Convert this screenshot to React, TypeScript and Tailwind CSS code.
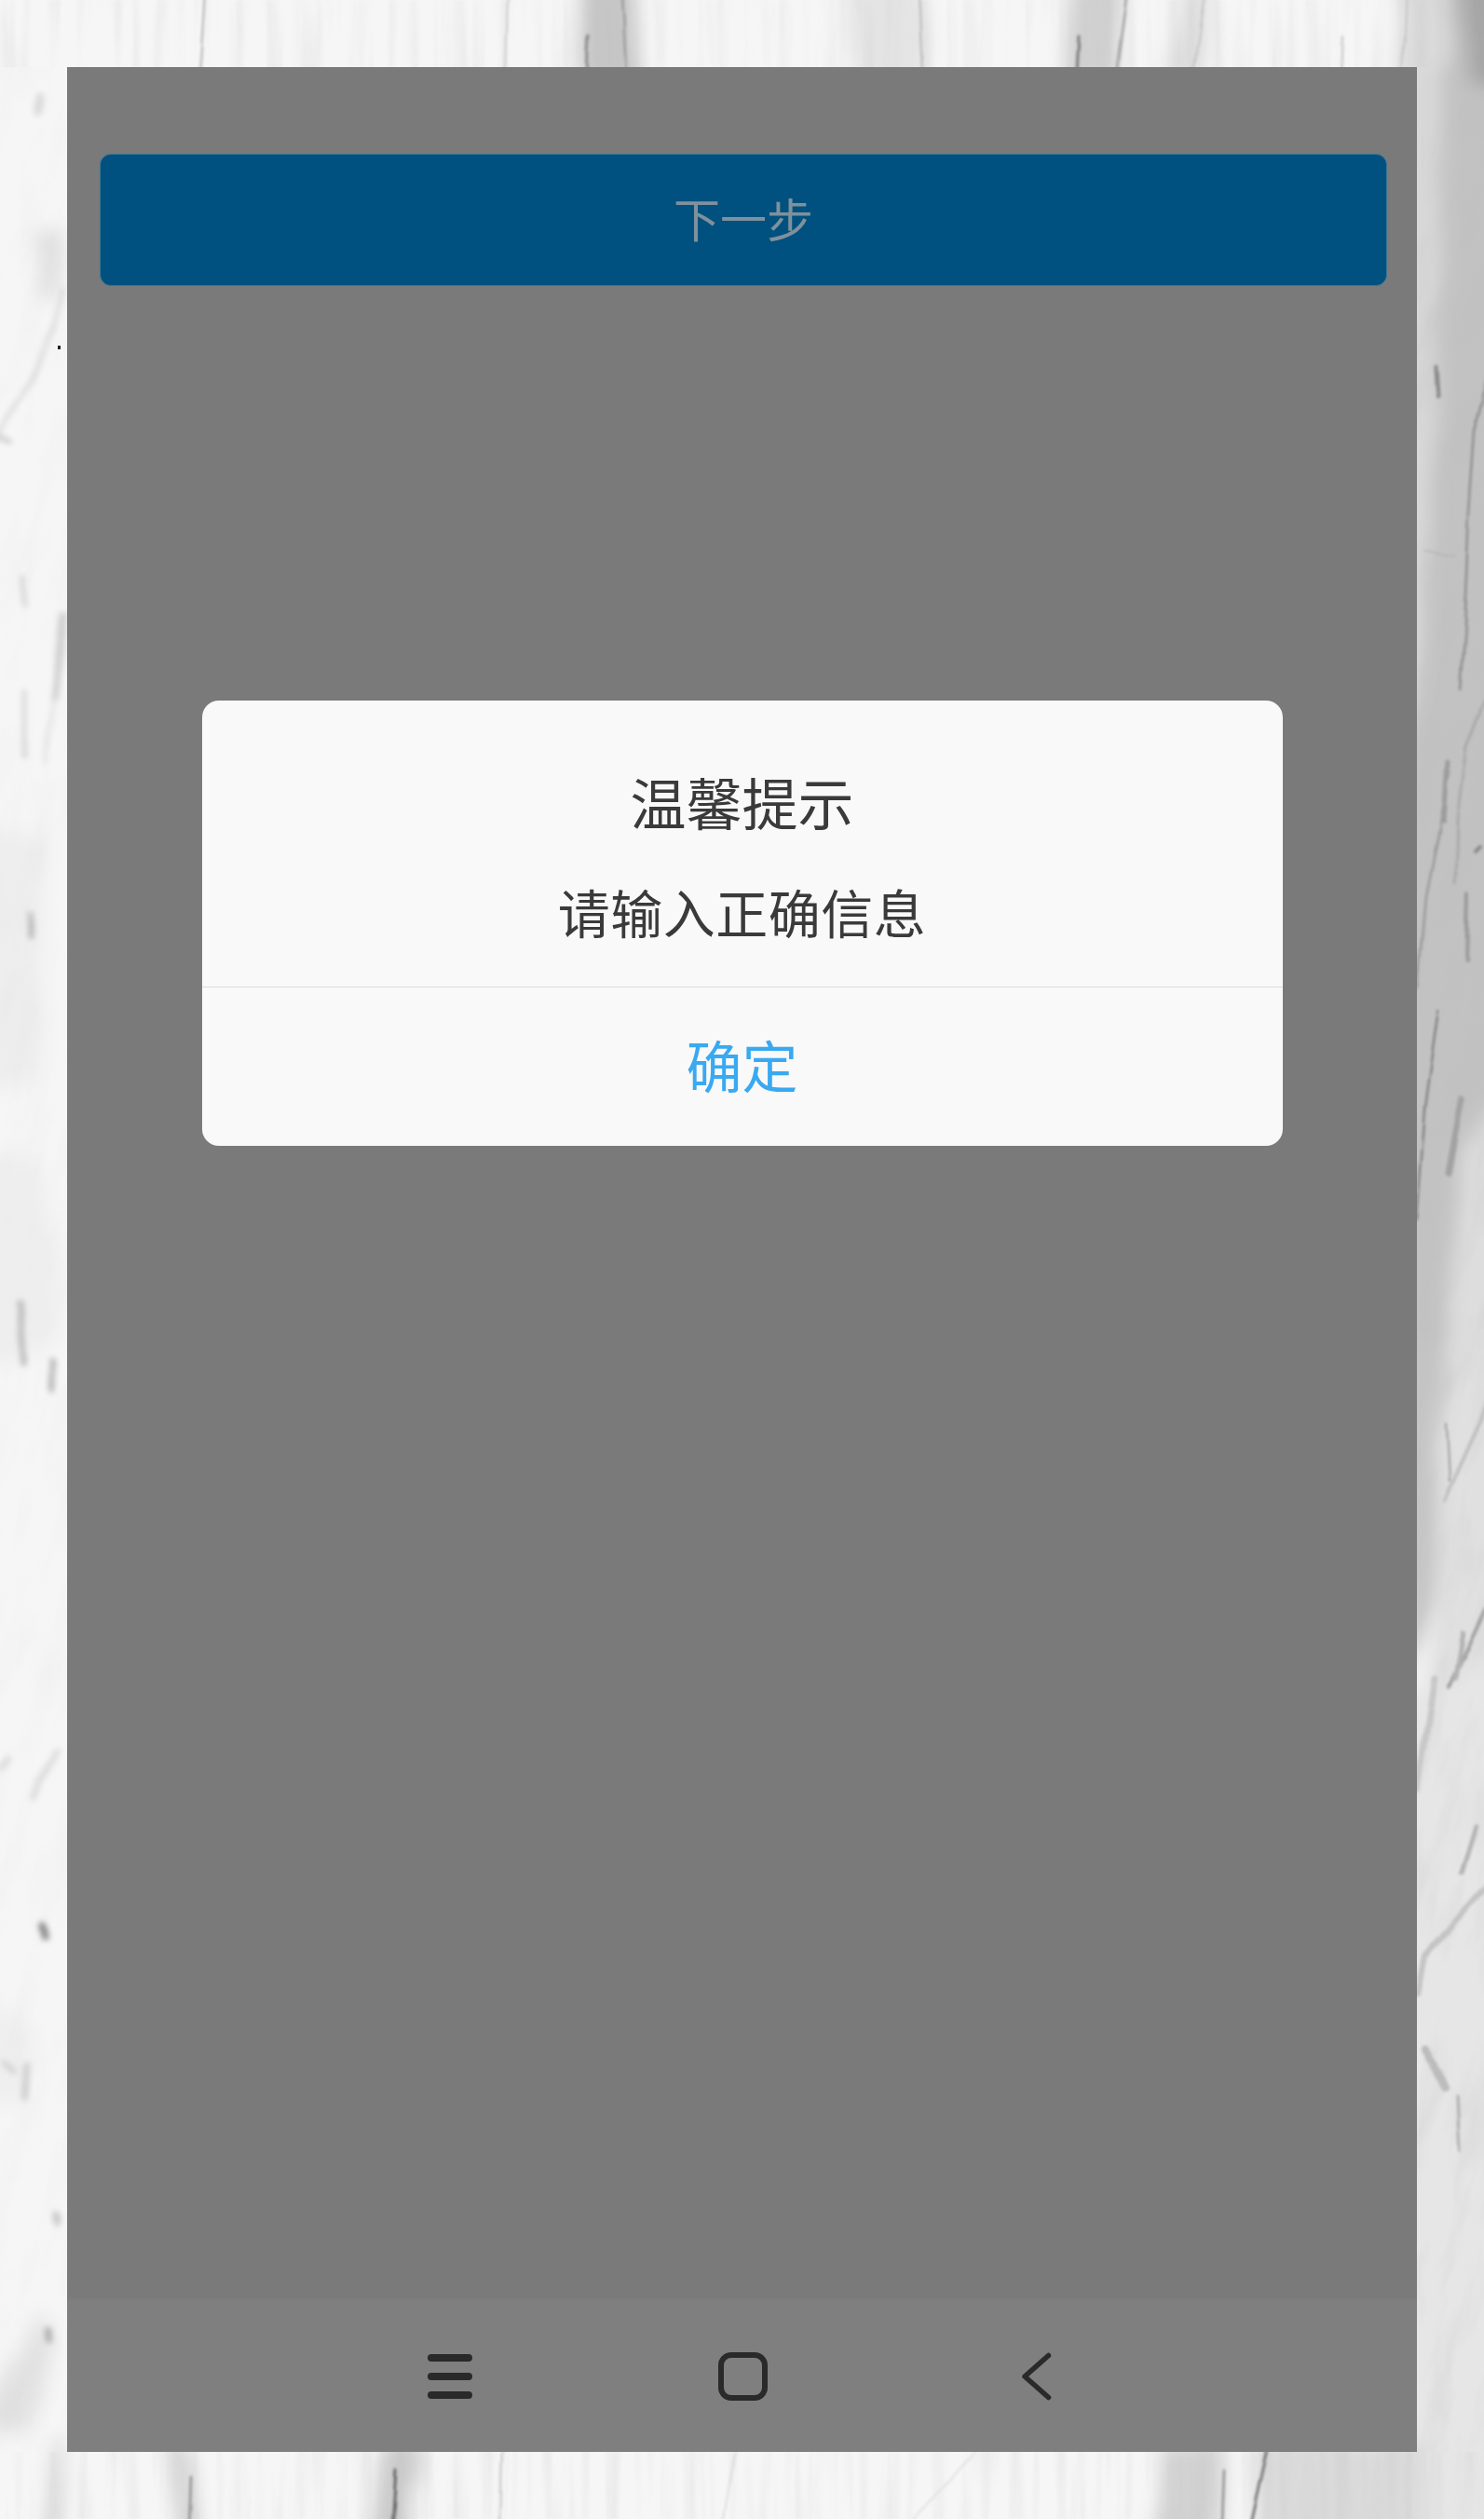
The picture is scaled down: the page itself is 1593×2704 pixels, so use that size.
import React from 'react';

// marble backdrop: soft patches, then veins on top
const patches: [string, string][] = [
  ['1500,-40 1660,-40 1660,1480 1500,1480', '#c2c2c2'],
  ['1500,72 1546,72 1540,420 1532,720 1500,800', '#d8d8d8'],
  ['1560,-40 1660,-40 1660,110 1575,90', '#a6a6a6'],
  ['1500,-40 1555,-40 1550,80 1500,80', '#dadada'],
  ['1660,1120 1660,1480 1566,1520 1556,1400 1570,1230', '#dddddd'],
  ['1500,1440 1552,1440 1550,1560 1535,1740 1500,1830', '#c4c4c4'],
  ['1552,1440 1660,1440 1660,1760 1535,1830 1545,1650', '#e0e0e0'],
  ['1500,1830 1660,1760 1660,2760 1500,2760', '#e6e6e6'],
  ['632,-40 678,-40 674,90 628,90', '#c6c6c6'],
  ['1150,-40 1210,-40 1200,90 1146,90', '#d0d0d0'],
  ['1270,-40 1300,-40 1286,90 1258,90', '#dcdcdc'],
  ['905,-40 990,-40 990,90 925,90', '#e4e4e4'],
  ['190,2620 205,2620 205,2760 188,2760', '#cfcfcf'],
  ['412,2620 450,2620 445,2760 392,2760', '#cbcbcb'],
  ['60,2620 78,2620 60,2760 42,2760', '#d8d8d8'],
  ['1248,2620 1312,2620 1308,2760 1240,2760', '#d2d2d2'],
  ['1350,2620 1530,2620 1530,2760 1340,2760', '#dadada'],
  ['-40,880 50,900 45,1160 -40,1180', '#eeeeee'],
  ['-40,1230 50,1240 60,1440 -40,1480', '#eeeeee'],
  ['36,250 58,250 56,320 40,320', '#dedede'],
  ['-40,2600 45,2480 58,2520 20,2610', '#e2e2e2'],
  ['-40,2130 40,2180 30,2270 -40,2250', '#efefef'],
];

const veins: [string, number, string][] = [
  ['M222 -10 L219 40 L216 80', 2.5, '#bcbcbc'],
  ['M546 -10 L544 80', 2, '#cacaca'],
  ['M632 38 L630 80', 3, '#8c8c8c'],
  ['M668 -10 L672 80', 3, '#a0a0a0'],
  ['M986 -10 L990 80', 2, '#b6b6b6'],
  ['M1158 38 L1156 80', 3, '#7c7c7c'],
  ['M1210 -10 L1198 80', 3, '#a8a8a8'],
  ['M1292 -10 L1280 80', 2, '#c4c4c4'],
  ['M1442 40 L1440 80', 2, '#c4c4c4'],
  ['M1510 -10 L1506 80', 2, '#c4c4c4'],
  ['M204 2660 L202 2714', 3, '#9a9a9a'],
  ['M424 2650 L420 2714', 3, '#666666'],
  ['M540 2625 L538 2714', 2, '#c2c2c2'],
  ['M1052 2625 L972 2714', 2, '#e0e0e0'],
  ['M790 2625 L775 2714', 2, '#dcdcdc'],
  ['M1314 2650 L1312 2714', 2.5, '#909090'],
  ['M1362 2625 L1352 2670 L1342 2714', 3, '#787878'],
  ['M1600 390 L1585 450 L1578 550 L1574 640 L1567 740', 2.5, '#8e8e8e'],
  ['M1555 830 L1542 900 L1530 960 L1522 1060', 2.5, '#989898'],
  ['M1553 820 L1549 880', 5, '#9c9c9c'],
  ['M1543 395 L1545 425', 5, '#8a8a8a'],
  ['M1530 592 L1562 597', 1, '#a8a8a8'],
  ['M1545 1085 L1530 1190 L1521 1310', 2, '#747474'],
  ['M1600 740 L1575 800 L1565 880 L1563 950', 3, '#a8a8a8'],
  ['M1576 960 L1574 1030', 4, '#9a9a9a'],
  ['M1570 1180 L1562 1220 L1555 1260', 7, '#a2a2a2'],
  ['M1590 910 L1585 915', 4, '#8a8a8a'],
  ['M1552 1530 L1555 1590', 2, '#9c9c9c'],
  ['M1600 1500 L1550 1610', 4, '#c0c0c0'],
  ['M1600 1715 L1565 1790 L1555 1810', 4, '#a2a2a2'],
  ['M1570 1752 L1562 1802', 5, '#b2b2b2'],
  ['M1540 1800 L1522 1920', 7, '#c8c8c8'],
  ['M1585 1960 L1570 2010', 5, '#b4b4b4'],
  ['M1600 2020 L1530 2100 L1522 2140', 6, '#c4c4c4'],
  ['M1530 2200 L1545 2230 L1550 2240', 8, '#bcbcbc'],
  ['M1565 2250 L1568 2310', 3, '#aeaeae'],
];

const faintVeins: [string, number, string][] = [
  ['M70 310 L35 410 L-5 470', 4, '#d6d6d6'],
  ['M-5 468 L12 474', 5, '#c6c6c6'],
  ['M24 620 L25 650', 4, '#cccccc'],
  ['M25 740 L25 810', 3, '#c8c8c8'],
  ['M68 660 L58 750', 8, '#d0d0d0'],
  ['M58 750 L47 820', 3, '#dcdcdc'],
  ['M33 980 L33 1005', 6, '#acacac'],
  ['M45 105 L42 120', 8, '#d8d8d8'],
  ['M22 1400 L26 1462', 7, '#b8b8b8'],
  ['M57 1460 L56 1490', 6, '#b2b2b2'],
  ['M60 1880 L35 1930', 7, '#dcdcdc'],
  ['M8 1890 L0 1900', 6, '#d8d8d8'],
  ['M45 2068 L48 2080', 7, '#808080'],
  ['M30 2220 L28 2250', 8, '#cecece'],
  ['M15 2225 L5 2215', 6, '#d4d4d4'],
  ['M60 2378 L62 2386', 8, '#c8c8c8'],
  ['M49 2500 L50 2512', 6, '#acacac'],
];

const MarbleBackdrop: React.FC = () => (
  <svg className="absolute inset-0 w-full h-full" viewBox="0 0 1593 2704" preserveAspectRatio="none">
    <defs>
      <filter id="soft" x="-10%" y="-10%" width="120%" height="120%">
        <feTurbulence type="fractalNoise" baseFrequency="0.02 0.006" numOctaves="3" seed="5" result="n" />
        <feDisplacementMap in="SourceGraphic" in2="n" scale="30" xChannelSelector="R" yChannelSelector="G" />
        <feGaussianBlur stdDeviation="10" />
      </filter>
      <filter id="fine" x="-10%" y="-10%" width="120%" height="120%">
        <feTurbulence type="fractalNoise" baseFrequency="0.025 0.015" numOctaves="2" seed="12" result="n" />
        <feDisplacementMap in="SourceGraphic" in2="n" scale="9" xChannelSelector="R" yChannelSelector="G" />
        <feGaussianBlur stdDeviation="1.6" />
      </filter>
      <filter id="faint" x="-10%" y="-10%" width="120%" height="120%">
        <feTurbulence type="fractalNoise" baseFrequency="0.025 0.015" numOctaves="2" seed="3" result="n" />
        <feDisplacementMap in="SourceGraphic" in2="n" scale="10" xChannelSelector="R" yChannelSelector="G" />
        <feGaussianBlur stdDeviation="3" />
      </filter>
      <filter id="streaks" x="0" y="0" width="100%" height="100%">
        <feTurbulence type="fractalNoise" baseFrequency="0.06 0.003" numOctaves="4" seed="8" />
        <feColorMatrix values="0 0 0 0 0.5  0 0 0 0 0.5  0 0 0 0 0.5  1.8 0 0 0 -0.82" />
        <feGaussianBlur stdDeviation="1" />
      </filter>
      <filter id="cloud" x="0" y="0" width="100%" height="100%">
        <feTurbulence type="fractalNoise" baseFrequency="0.035 0.009" numOctaves="4" seed="21" />
        <feColorMatrix values="0 0 0 0 0.5  0 0 0 0 0.5  0 0 0 0 0.5  1.6 0 0 0 -0.72" />
      </filter>
      <clipPath id="strips">
        <rect x="0" y="0" width="1593" height="72" />
        <rect x="0" y="2632" width="1593" height="72" />
      </clipPath>
      <clipPath id="leftMargin">
        <rect x="0" y="72" width="72" height="2560" />
      </clipPath>
      <clipPath id="rightMargin">
        <rect x="1521" y="72" width="72" height="2560" />
      </clipPath>
    </defs>
    <rect width="1593" height="2704" fill="#f6f6f6" />
    <g filter="url(#soft)">
      {patches.map(([p, c], i) => <polygon key={i} points={p} fill={c} />)}
    </g>
    <g clipPath="url(#strips)">
      <rect width="1593" height="2704" filter="url(#streaks)" opacity="0.3" />
    </g>
    <g clipPath="url(#leftMargin)">
      <rect x="-700" y="-300" width="3000" height="3300" transform="rotate(14 796 1352)" filter="url(#cloud)" opacity="0.1" />
    </g>
    <g clipPath="url(#rightMargin)">
      <rect x="-700" y="-300" width="3000" height="3300" transform="rotate(14 796 1352)" filter="url(#cloud)" opacity="0.32" />
    </g>
    <g filter="url(#fine)" fill="none" strokeLinecap="round" strokeLinejoin="round">
      {veins.map(([d, w, c], i) => <path key={i} d={d} stroke={c} strokeWidth={w} />)}
    </g>
    <g filter="url(#faint)" fill="none" strokeLinecap="round" strokeLinejoin="round">
      {faintVeins.map(([d, w, c], i) => <path key={i} d={d} stroke={c} strokeWidth={w} />)}
    </g>
    <rect x="62" y="371" width="3" height="4" fill="#222222" />
  </svg>
);

const NavBar: React.FC = () => (
  <div className="mt-auto h-[165px] flex items-center pl-[387px] bg-[#7f7f7f] border-t-[3px] border-[#7d7d7d]">
    <svg className="w-[48px] h-[48px] shrink-0" viewBox="0 0 48 48" fill="#2a2a2a">
      <rect x="0" y="0" width="48" height="8" rx="4" />
      <rect x="0" y="20" width="48" height="8" rx="4" />
      <rect x="0" y="40" width="48" height="8" rx="4" />
    </svg>
    <svg className="ml-[264px] w-[53px] h-[52px] shrink-0" viewBox="0 0 53 52" fill="none" stroke="#2a2a2a" strokeWidth="6">
      <rect x="3" y="3" width="47" height="46" rx="11" />
    </svg>
    <svg className="ml-[272px] w-[33px] h-[52px] shrink-0" viewBox="0 0 33 52" fill="none" stroke="#2a2a2a" strokeWidth="5.5" strokeLinecap="round" strokeLinejoin="round">
      <path d="M29.5 3.5 L4 26 L29.5 48.5" />
    </svg>
  </div>
);

const AlertDialog: React.FC = () => (
  <div className="absolute inset-0 flex justify-center pt-[680px]">
    <div className="w-[1160px] h-[478px] flex flex-col rounded-[18px] bg-[#f9f9f9] overflow-hidden">
      <div className="pt-[66px] h-[308px] border-b border-[#dcdcdc] text-center text-[#3a3a3a]">
        <div className="text-[60px] leading-[84px]">温馨提示</div>
        <div className="mt-[38px] text-[56px] leading-[76px] tracking-[0.5px]">请输入正确信息</div>
      </div>
      <div className="flex-1 flex items-center justify-center pb-[6px] text-[60px] text-[#39a9f1]">确定</div>
    </div>
  </div>
);

const App: React.FC = () => {
  return (
    <div className="relative w-full h-[2704px] overflow-hidden pt-[72px] pl-[72px] pr-[72px] font-['Noto_Sans_CJK_SC',sans-serif]">
      <MarbleBackdrop />
      <div className="relative h-[2560px] flex flex-col bg-[#7a7a7a]">
        <div className="mt-[93px] ml-[35px] mr-[32px] h-[142px] flex items-center justify-center pb-[6px] rounded-[12px] bg-[#00517f] border border-[#3f7594] text-[50px] text-[#7f919c]">
          下一步
        </div>
        <NavBar />
        <AlertDialog />
      </div>
    </div>
  );
};

export default App;
